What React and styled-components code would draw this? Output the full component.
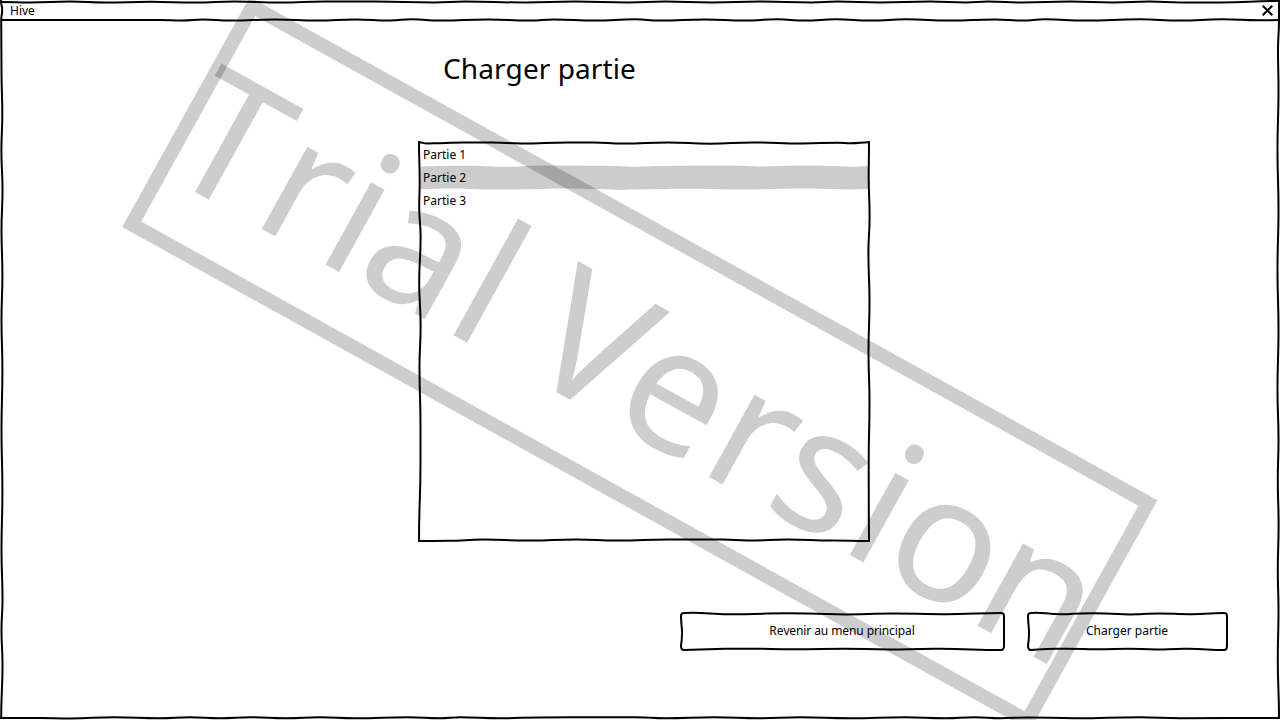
import React from "react";
import styled, { createGlobalStyle } from "styled-components";

const GlobalStyle = createGlobalStyle`
  * { box-sizing: border-box; }
  body { margin: 0; background: #fff; overflow: hidden; }
`;

const Window = styled.div`
  position: relative;
  width: 1280px;
  height: 720px;
  overflow: hidden;
  display: flex;
  flex-direction: column;
  font-family: "Noto Sans", sans-serif;
  font-size: 12px;
  font-kerning: none;
  color: #000;
`;

const Sketch = styled.svg`
  position: absolute;
  inset: 0;
  width: 100%;
  height: 100%;
  overflow: visible;
  pointer-events: none;
  fill: none;
  stroke: #000;
  stroke-width: 2;
  stroke-linejoin: miter;
  stroke-linecap: square;
`;

const TitleBar = styled.header`
  display: flex;
  align-items: center;
  justify-content: space-between;
  height: 20px;
  padding: 2px 6px 0 10px;
  line-height: 16px;
`;

const CloseIcon = styled.svg`
  width: 12px;
  height: 12px;
  stroke: #000;
  stroke-width: 2;
  fill: none;
`;

const Content = styled.main`
  flex: 1;
  display: flex;
  flex-direction: column;
  padding: 29px 52px 0 418px;
`;

const Heading = styled.h1`
  margin: 0 0 0 25px;
  font-size: 28px;
  line-height: 38px;
  font-weight: 400;
  letter-spacing: 0.08px;
`;

const SaveList = styled.ul`
  position: relative;
  width: 452px;
  height: 400px;
  margin: 55px 0 0;
  padding: 1px 2px;
  list-style: none;
`;

const SaveItem = styled.li`
  position: relative;
  height: 23px;
  padding-left: 3px;
  line-height: 23px;
`;

const Highlight = styled(Sketch)`
  fill: #ccc;
  stroke: none;
`;

const Label = styled.span`
  position: relative;
  letter-spacing: ${(p) => p.$tracking || 0}px;
`;

const Actions = styled.footer`
  display: flex;
  align-self: flex-end;
  gap: 22px;
  margin-top: 70px;
`;

const Button = styled.button`
  position: relative;
  width: ${(p) => p.$width}px;
  height: 39px;
  padding: 0 1px 2px 0;
  border: 0;
  background: none;
  font: inherit;
  font-kerning: none;
  color: inherit;
`;

const Watermark = styled.div`
  position: absolute;
  left: 121px;
  top: 232px;
  width: 1037.5px;
  height: 262.5px;
  border: 14.4px solid rgba(0, 0, 0, 0.196);
  transform: rotate(29deg);
  pointer-events: none;
`;

const WatermarkText = styled.svg`
  display: block;
  width: 100%;
  height: 100%;
  overflow: visible;
  fill: rgba(0, 0, 0, 0.196);
  font-size: 175.4px;
`;

/* Glyph advances on a 12-unit em grid: one per character of the stamp. */
const stampAdvances = [7, 5, 3, 7, 3, 3, 7, 7, 5, 6, 3, 7];
const stampPositions = stampAdvances
  .reduce((xs, a) => [...xs, xs[xs.length - 1] + (a * 175.4) / 12], [-8.2])
  .map((x) => x.toFixed(2))
  .join(" ");

/* Smooth hand-drawn stroke through a list of points. */
const wavy = (pts) =>
  pts.reduce((d, [x, y], i) => {
    if (i === 0) return `M${x} ${y}`;
    const [px, py] = pts[i - 1];
    const cx = (x - px) / 2;
    const cy = (y - py) / 2;
    return Math.abs(x - px) > Math.abs(y - py)
      ? `${d}C${px + cx} ${py} ${x - cx} ${y} ${x} ${y}`
      : `${d}C${px} ${py + cy} ${x} ${y - cy} ${x} ${y}`;
  }, "");

const frameEdges = [
  [[1, 2], [30, 2.5], [70, 1.6], [105, 2.6], [150, 1.8], [195, 2.6], [235, 1.6], [280, 2.6], [325, 1.6], [375, 1.6], [434, 2.5], [465, 1.6], [525, 2.5], [575, 1.6], [628, 2.5], [665, 1.6], [712, 2.5], [760, 1.6], [812, 2.5], [837, 1.6], [880, 2.5], [930, 1.6], [966, 2.5], [988, 1.6], [1022, 2.5], [1070, 1.6], [1113, 2.5], [1150, 1.6], [1180, 2.4], [1220, 2.6], [1279, 1]],
  [[2, 20], [160, 20], [182, 20.4], [203, 19.4], [230, 20.5], [275, 19.4], [318, 20.5], [355, 19.4], [390, 20.4], [412, 19.3], [440, 20.6], [488, 19.4], [530, 20.6], [554, 19.4], [595, 20.6], [635, 19.3], [660, 20.6], [705, 19.4], [745, 20.6], [777, 19.3], [805, 20.6], [836, 19.3], [871, 20.6], [906, 19.3], [950, 20.6], [995, 19.4], [1022, 20.6], [1045, 19.3], [1085, 20.6], [1140, 19.3], [1180, 20.5], [1222, 19.3], [1260, 20.3], [1279, 20]],
  [[1, 1], [2.2, 10], [1.2, 20], [1.5, 70], [2.3, 115], [1.4, 150], [2.5, 190], [1.5, 230], [2.4, 275], [1.5, 320], [2.4, 370], [1.5, 430], [2.4, 490], [1.5, 550], [2.5, 600], [1.5, 630], [2.5, 665], [1.2, 718]],
  [[1279, 0], [1279, 20], [1278, 50], [1278.5, 90], [1277.5, 150], [1278.5, 210], [1277.5, 270], [1278.5, 330], [1277.5, 390], [1278.5, 440], [1277.8, 480], [1278.6, 525], [1277.8, 570], [1278.5, 610], [1277.8, 660], [1279, 718]],
  [[1, 718], [40, 718], [70, 718.4], [115, 717.3], [160, 718.3], [190, 717.3], [220, 718.3], [250, 717.3], [287, 718.3], [320, 717.3], [355, 718.3], [408, 717.3], [440, 718.3], [460, 717.3], [500, 718.3], [540, 717.4], [605, 717.3], [637, 717.3], [665, 718.3], [715, 717.3], [760, 718.3], [800, 717.3], [850, 718.3], [905, 717.3], [945, 718.3], [975, 717.3], [1000, 718.3], [1028, 717.4], [1075, 718.3], [1140, 717.3], [1180, 718.2], [1279, 718]],
];

const listEdges = [
  [[1, 0.2], [9, 1.5], [22, 1.2], [45, 0.4], [75, 0.4], [103, 1.5], [150, 0.4], [175, 0.4], [205, 1.4], [250, 0.4], [292, 1.8], [335, 0.4], [385, 1.5], [420, 0.7], [433, 1.2], [451, 0.2]],
  [[1, 0.2], [1.7, 40], [1.2, 65], [2.6, 95], [1.2, 140], [2.6, 184], [1.5, 225], [2.5, 285], [2.5, 320], [1, 399]],
  [[451, 0.2], [450.7, 35], [451.6, 75], [450.4, 110], [451.5, 160], [450.5, 210], [451.5, 260], [450.7, 320], [450.8, 370], [451, 399]],
  [[1, 399], [30, 398.8], [65, 397.6], [112, 398.6], [158, 397.5], [200, 398.5], [250, 397.5], [305, 397.6], [330, 398.5], [370, 397.5], [415, 398.5], [451, 399]],
];

const buttonPath = (w) =>
  `M4 1C${w * 0.08} -0.3 ${w * 0.1} 3 ${w * 0.2} 2.2S${w * 0.31} 0.6 ${w * 0.39} 1.6S${w * 0.52} 3 ${w * 0.6} 1.8S${w * 0.75} 2.5 ${w * 0.82} 2.2S${w * 0.94} 1 ${w - 4} 1Q${w - 1} 1 ${w - 1} 4V34Q${w - 1} 38 ${w - 4} 38C${w * 0.9} 38 ${w * 0.88} 36.5 ${w * 0.78} 36.8S${w * 0.66} 38 ${w * 0.57} 37S${w * 0.42} 37.5 ${w * 0.34} 37.2S${w * 0.2} 36.3 ${w * 0.14} 36.8S${w * 0.06} 37.6 4 38Q1 38 1 34C2.3 24 2.4 22 1.9 17S1 8 1 4Q1 1 4 1Z`;

const HandDrawn = ({ edges }) => (
  <Sketch>
    {edges.map((pts, i) => (
      <path key={i} d={wavy(pts)} />
    ))}
  </Sketch>
);

const SketchButton = ({ width, tracking, children }) => (
  <Button $width={width}>
    <Sketch>
      <path d={buttonPath(width)} />
    </Sketch>
    <Label $tracking={tracking}>{children}</Label>
  </Button>
);

export default function App() {
  const saves = ["Partie 1", "Partie 2", "Partie 3"];
  const selected = 1;
  return (
    <Window>
      <GlobalStyle />
      <HandDrawn edges={frameEdges} />
      <TitleBar>
        <Label>Hive</Label>
        <CloseIcon viewBox="0 0 12 12">
          <path d="M.7 .7L10.3 10.3M10.3 .7L.7 10.3" />
        </CloseIcon>
      </TitleBar>
      <Content>
        <Heading>Charger partie</Heading>
        <SaveList>
          {saves.map((name, i) => (
            <SaveItem key={name}>
              {i === selected && (
                <Highlight>
                  <path d="M1 .6C30 -.4 50 -.4 65 .2S88 1.2 103 .2S150 -.5 180 -.3S205 1.2 225 .4S285 -.8 310 -.5S330 1 350 .2S400 -.8 420 .3S440 .2 448 0V23C430 24 410 23 390 22.6S340 24 310 23.5S265 22.4 240 23S200 24 180 23.2S140 22.4 120 23S70 23.8 50 23S20 22.8 1 23.2Z" />
                </Highlight>
              )}
              <Label>{name}</Label>
            </SaveItem>
          ))}
          <HandDrawn edges={listEdges} />
        </SaveList>
        <Actions>
          <SketchButton width={325} tracking={-0.1}>
            Revenir au menu principal
          </SketchButton>
          <SketchButton width={201}>Charger partie</SketchButton>
        </Actions>
      </Content>
      <Watermark>
        <WatermarkText>
          <text x={stampPositions} y="183.1">
            Trial Version
          </text>
        </WatermarkText>
      </Watermark>
    </Window>
  );
}
